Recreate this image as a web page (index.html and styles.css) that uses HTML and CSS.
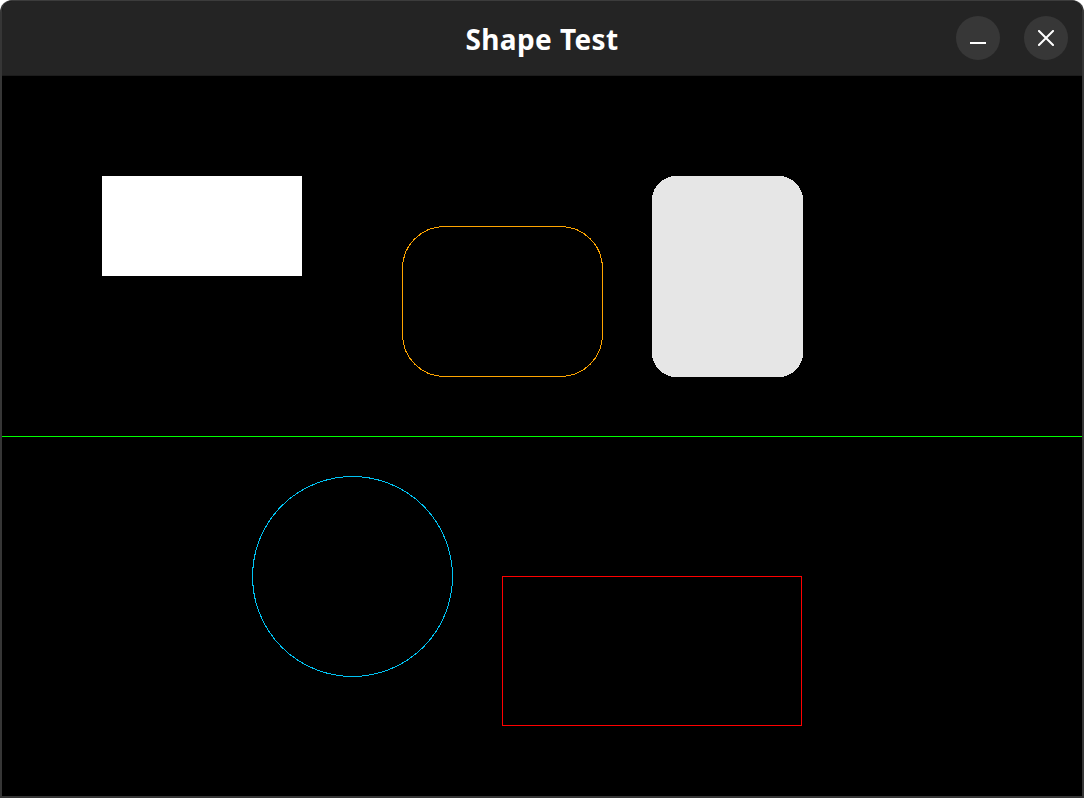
FILE: index.html
```html
<!DOCTYPE html>
<html lang="en">
<head>
<meta charset="utf-8">
<title>Shape Test</title>
<link rel="stylesheet" href="styles.css">
</head>
<body>
<div class="window">
  <header class="titlebar">
    <div class="spacer"></div>
    <h1 class="title">Shape Test</h1>
    <div class="controls">
      <button class="wbtn" aria-label="Minimize">
        <svg width="16" height="16" viewBox="0 0 16 16"><line x1="0" y1="13" x2="16" y2="13" stroke="#ffffff" stroke-width="2"/></svg>
      </button>
      <button class="wbtn" aria-label="Close">
        <svg width="16" height="16" viewBox="0 0 16 16"><path d="M1 1 L15 15 M15 1 L1 15" stroke="#ffffff" stroke-width="2" stroke-linecap="square" fill="none"/></svg>
      </button>
    </div>
  </header>
  <main class="canvas">
    <svg class="drawing" width="1080" height="720" viewBox="0 0 1080 720" shape-rendering="crispEdges">
      <rect x="100" y="100" width="200" height="100" fill="#ffffff"/>
      <rect x="400.5" y="150.5" width="200" height="150" rx="42" ry="42" fill="none" stroke="#ffa500" stroke-width="1"/>
      <rect x="650" y="100" width="151" height="201" rx="24" ry="24" fill="#e6e6e6"/>
      <line x1="0" y1="360.5" x2="1080" y2="360.5" stroke="#00ff00" stroke-width="1"/>
      <circle cx="350.5" cy="500.5" r="100" fill="none" stroke="#00c4f4" stroke-width="1"/>
      <rect x="500.5" y="500.5" width="299" height="149" fill="none" stroke="#ff0000" stroke-width="1"/>
    </svg>
  </main>
</div>
</body>
</html>
```

FILE: styles.css
```css
html, body {
  margin: 0;
  padding: 0;
  background: #ffffff;
}

.window {
  width: 1084px;
  height: 798px;
  box-sizing: border-box;
  border: 2px solid #363636;
  border-top: 1px solid #3c3c3c;
  border-radius: 12px 12px 0 0;
  background: #000000;
  overflow: hidden;
  display: flex;
  flex-direction: column;
}

.titlebar {
  height: 74px;
  flex: 0 0 74px;
  background: #242424;
  border-bottom: 1px solid #1c1c1c;
  display: grid;
  grid-template-columns: 1fr auto 1fr;
  align-items: center;
  padding: 0 14px;
}

.title {
  margin: 0;
  padding-top: 2px;
  font-family: "Noto Sans", "Open Sans", sans-serif;
  font-weight: 700;
  font-size: 28px;
  color: #ffffff;
  letter-spacing: 0.4px;
}

.controls {
  display: flex;
  justify-content: flex-end;
  gap: 24px;
}

.wbtn {
  width: 44px;
  height: 44px;
  border-radius: 50%;
  border: none;
  padding: 0;
  margin: 0;
  background: #373737;
  display: flex;
  align-items: center;
  justify-content: center;
}

.wbtn svg {
  display: block;
}

.canvas {
  flex: 1 1 auto;
  background: #000000;
}

.drawing {
  display: block;
}
```
